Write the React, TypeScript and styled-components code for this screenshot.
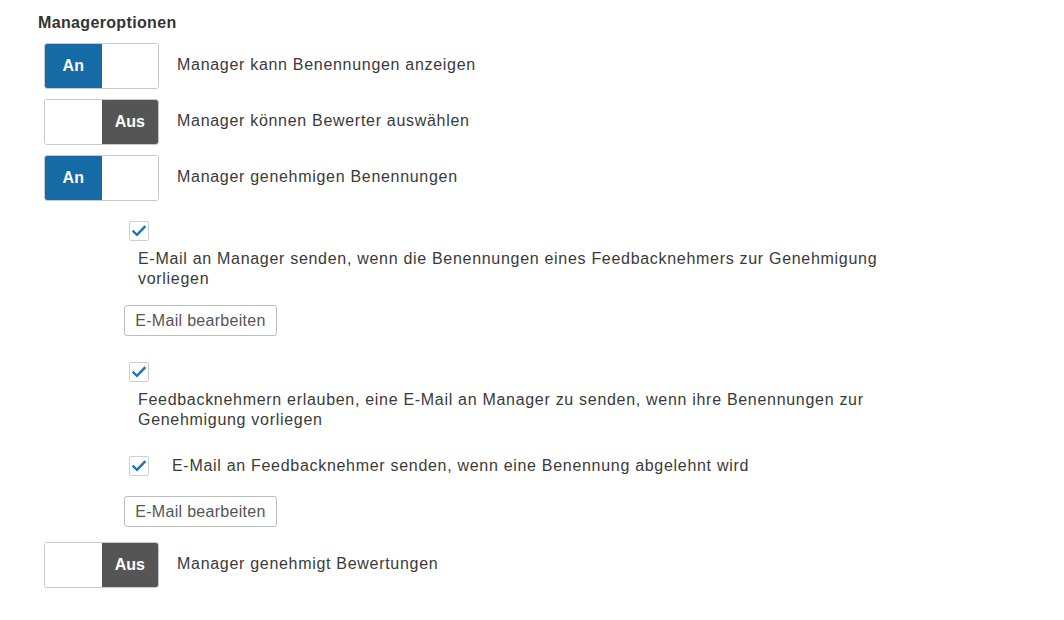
import React from "react";
import styled, { createGlobalStyle } from "styled-components";

const Global = createGlobalStyle`
  html, body { margin: 0; padding: 0; background: #fff; }
  body { font-family: "Liberation Sans", Arial, sans-serif; color: #3a3a3a; }
`;

const Page = styled.div`
  width: 1064px;
  height: 620px;
  box-sizing: border-box;
  padding: 13px 0 0 38px;
  display: flex;
  flex-direction: column;
`;

const Heading = styled.h2`
  margin: 0 0 10px 0;
  font-size: 16px;
  line-height: 20px;
  font-weight: 700;
  letter-spacing: 0.35px;
  color: #333;
`;

const ToggleRow = styled.div`
  display: flex;
  align-items: center;
  gap: 18px;
  margin-left: 6px;
  height: 46px;
  margin-bottom: 10px;
`;

const Toggle = styled.div`
  width: 115px;
  height: 46px;
  box-sizing: border-box;
  border: 1px solid #c9c9c9;
  border-radius: 3px;
  display: flex;
  overflow: hidden;
  flex-shrink: 0;
`;

const Half = styled.div<{ $active: boolean; $kind: "on" | "off" }>`
  flex: 1;
  display: flex;
  align-items: center;
  justify-content: center;
  font-size: 16px;
  font-weight: 700;
  color: #fff;
  background: ${(p) =>
    p.$active ? (p.$kind === "on" ? "#166aa6" : "#555555") : "#ffffff"};
`;

const RowLabel = styled.span`
  font-size: 16px;
  letter-spacing: 0.7px;
  color: #3a3a3a;
  padding-bottom: 3px;
`;

const Sub = styled.div`
  margin-left: 86px;
  display: flex;
  flex-direction: column;
  align-items: flex-start;
  padding-top: 10px;
`;

const Box = styled.span`
  width: 20px;
  height: 20px;
  box-sizing: border-box;
  border: 1px solid #cfcfcf;
  border-radius: 2px;
  display: inline-flex;
  align-items: center;
  justify-content: center;
  margin-left: 5px;
  flex-shrink: 0;
`;

const Check = () => (
  <Box>
    <svg width="14" height="12" viewBox="0 0 14 12">
      <path d="M1.5 6.5 L5 9.8 L12.5 2" fill="none" stroke="#1a73c0" strokeWidth="2.4" strokeLinecap="square" />
    </svg>
  </Box>
);

const StackedOption = styled.div`
  display: flex;
  flex-direction: column;
  align-items: flex-start;
`;

const OptText = styled.p<{ $inline?: boolean }>`
  margin: ${(p) => (p.$inline ? "0 0 0 23px" : "8px 0 0 14px")};
  font-size: 16px;
  line-height: 20px;
  letter-spacing: 0.7px;
  color: #3a3a3a;
  max-width: 790px;
`;

const InlineOption = styled.div`
  display: flex;
  align-items: center;
`;

const Spacer = styled.div<{ $h: number }>`
  height: ${(p) => p.$h}px;
  flex-shrink: 0;
`;

const EditButton = styled.button`
  font-family: inherit;
  font-size: 16px;
  letter-spacing: 0.3px;
  color: #555;
  background: #fff;
  border: 1px solid #bdbdbd;
  border-radius: 3px;
  width: 153px;
  height: 31px;
  padding: 0;
`;

const ToggleSwitch = ({ on }: { on: boolean }) => (
  <Toggle>
    <Half $active={on} $kind="on">{on ? "An" : ""}</Half>
    <Half $active={!on} $kind="off">{!on ? "Aus" : ""}</Half>
  </Toggle>
);

export default function App() {
  return (
    <>
      <Global />
      <Page>
        <Heading>Manageroptionen</Heading>
        <ToggleRow>
          <ToggleSwitch on />
          <RowLabel>Manager kann Benennungen anzeigen</RowLabel>
        </ToggleRow>
        <ToggleRow>
          <ToggleSwitch on={false} />
          <RowLabel>Manager können Bewerter auswählen</RowLabel>
        </ToggleRow>
        <ToggleRow>
          <ToggleSwitch on />
          <RowLabel>Manager genehmigen Benennungen</RowLabel>
        </ToggleRow>
        <Sub>
          <StackedOption>
            <Check />
            <OptText>
              E-Mail an Manager senden, wenn die Benennungen eines Feedbacknehmers zur Genehmigung vorliegen
            </OptText>
          </StackedOption>
          <Spacer $h={16} />
          <EditButton>E-Mail bearbeiten</EditButton>
          <Spacer $h={26} />
          <StackedOption>
            <Check />
            <OptText>
              Feedbacknehmern erlauben, eine E-Mail an Manager zu senden, wenn ihre Benennungen zur Genehmigung vorliegen
            </OptText>
          </StackedOption>
          <Spacer $h={26} />
          <InlineOption>
            <Check />
            <OptText $inline>E-Mail an Feedbacknehmer senden, wenn eine Benennung abgelehnt wird</OptText>
          </InlineOption>
          <Spacer $h={20} />
          <EditButton>E-Mail bearbeiten</EditButton>
        </Sub>
        <Spacer $h={15} />
        <ToggleRow>
          <ToggleSwitch on={false} />
          <RowLabel>Manager genehmigt Bewertungen</RowLabel>
        </ToggleRow>
      </Page>
    </>
  );
}
